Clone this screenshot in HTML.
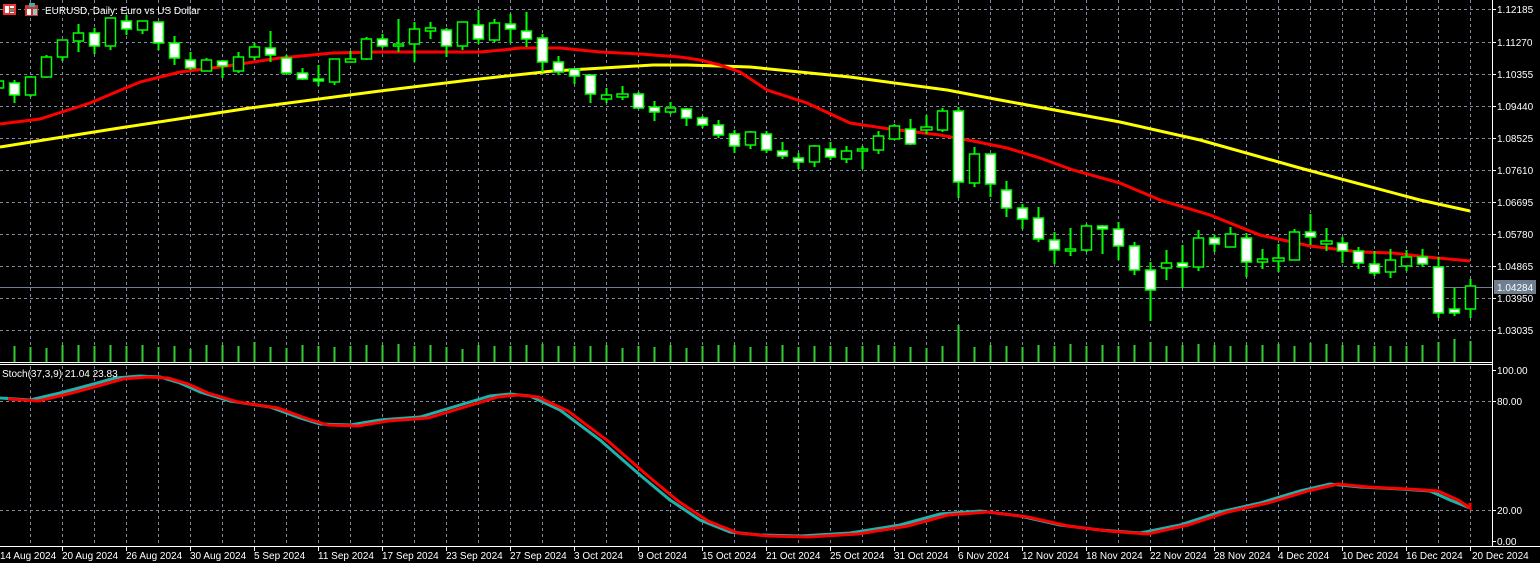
<!DOCTYPE html>
<html><head><meta charset="utf-8"><style>
html,body{margin:0;padding:0;background:#000;width:1540px;height:563px;overflow:hidden}
svg{display:block}
text{font-family:"Liberation Sans","DejaVu Sans",sans-serif;font-size:10px;fill:#fff}
</style></head><body>
<svg id="s" width="1540" height="563" xmlns="http://www.w3.org/2000/svg">
<rect width="1540" height="563" fill="#000"/>
<g id="grid" stroke="#7d8898" stroke-width="1" stroke-dasharray="3,3"></g>
<line x1="0" y1="287.5" x2="1492" y2="287.5" stroke="#6f7f8f" stroke-width="1"/>
<g id="vol" stroke="#32cd32" stroke-width="2"></g>
<polyline id="yel" fill="none" stroke="#ffff00" stroke-width="3"/>
<polyline id="red" fill="none" stroke="#ff0000" stroke-width="3"/>
<g id="cand"></g>
<polyline id="st1" fill="none" stroke="#20b2aa" stroke-width="3"/>
<polyline id="st2" fill="none" stroke="#ff0000" stroke-width="3"/>
<line x1="0" y1="362.5" x2="1492" y2="362.5" stroke="#fff"/>
<line x1="0" y1="364.5" x2="1492" y2="364.5" stroke="#fff"/>
<line x1="1492.5" y1="0" x2="1492.5" y2="546" stroke="#fff"/>
<line x1="0" y1="546.5" x2="1540" y2="546.5" stroke="#fff"/>
<g id="ticks" stroke="#fff"></g>
<rect x="1494" y="280" width="42" height="14" fill="#6f7f8f"/>
<!-- header -->
<rect x="3" y="4" width="13" height="11" fill="#e33"/><rect x="5" y="6" width="4" height="7" fill="#fff"/><rect x="10" y="6" width="4" height="2" fill="#fff"/><rect x="10" y="9" width="4" height="2" fill="#2aa"/><rect x="10" y="12" width="4" height="1" fill="#fff"/>
<rect x="25" y="5" width="13" height="11" fill="#c33"/><rect x="29" y="3" width="6" height="4" fill="#4aa"/><rect x="27" y="9" width="4" height="6" fill="#fff"/><rect x="33" y="9" width="4" height="6" fill="#8cc"/>
<text x="45" y="14" font-size="11">EURUSD, Daily:  Euro vs US Dollar</text>
<text x="2" y="377">Stoch(37,3,9) 21.04 23.83</text>
<g id="plab">
<text x="1497" y="13">1.12185</text>
<text x="1497" y="46">1.11270</text>
<text x="1497" y="78">1.10355</text>
<text x="1497" y="110">1.09440</text>
<text x="1497" y="142">1.08525</text>
<text x="1497" y="174">1.07610</text>
<text x="1497" y="206">1.06695</text>
<text x="1497" y="238">1.05780</text>
<text x="1497" y="270">1.04865</text>
<text x="1497" y="291">1.04284</text>
<text x="1497" y="302">1.03950</text>
<text x="1497" y="334">1.03035</text>
<text x="1497" y="374">100.00</text>
<text x="1497" y="405">80.00</text>
<text x="1497" y="514">20.00</text>
<text x="1497" y="545">0.00</text>
</g>
<g>
<text x="0" y="559">14 Aug 2024</text>
<text x="62" y="559">20 Aug 2024</text>
<text x="126" y="559">26 Aug 2024</text>
<text x="190" y="559">30 Aug 2024</text>
<text x="254" y="559">5 Sep 2024</text>
<text x="318" y="559">11 Sep 2024</text>
<text x="382" y="559">17 Sep 2024</text>
<text x="446" y="559">23 Sep 2024</text>
<text x="510" y="559">27 Sep 2024</text>
<text x="574" y="559">3 Oct 2024</text>
<text x="638" y="559">9 Oct 2024</text>
<text x="702" y="559">15 Oct 2024</text>
<text x="766" y="559">21 Oct 2024</text>
<text x="830" y="559">25 Oct 2024</text>
<text x="894" y="559">31 Oct 2024</text>
<text x="958" y="559">6 Nov 2024</text>
<text x="1022" y="559">12 Nov 2024</text>
<text x="1086" y="559">18 Nov 2024</text>
<text x="1150" y="559">22 Nov 2024</text>
<text x="1214" y="559">28 Nov 2024</text>
<text x="1278" y="559">4 Dec 2024</text>
<text x="1342" y="559">10 Dec 2024</text>
<text x="1406" y="559">16 Dec 2024</text>
<text x="1472" y="559">20 Dec 2024</text>
</g>
</svg>
<script>
var NS="http://www.w3.org/2000/svg";
function el(p,t,a){var e=document.createElementNS(NS,t);for(var k in a)e.setAttribute(k,a[k]);document.getElementById(p).appendChild(e);return e;}
// grid
for(var x=30;x<1492;x+=32){el("grid","line",{x1:x+.5,y1:0,x2:x+.5,y2:362});el("grid","line",{x1:x+.5,y1:366,x2:x+.5,y2:546});}
[9,42,74,106,138,170,202,234,266,298,330].forEach(function(y){el("grid","line",{x1:0,y1:y+.5,x2:1492,y2:y+.5});});
[401,510].forEach(function(y){el("grid","line",{x1:0,y1:y+.5,x2:1492,y2:y+.5});});
[370,401,510,541].forEach(function(y){el("ticks","line",{x1:1492,y1:y+.5,x2:1496,y2:y+.5});});
[9,42,74,106,138,170,202,234,266,298,330].forEach(function(y){el("ticks","line",{x1:1492,y1:y+.5,x2:1496,y2:y+.5});});
for(var x=-2;x<1492;x+=64)el("ticks","line",{x1:x+.5,y1:546,x2:x+.5,y2:551});
// candles: [bodyTop, bodyBot, hi, lo, white?]
var C=[[81,88,79,90,0],[83,95,80,103,1],[77,95,76,97,0],[57,77,55,78,0],[40,57,40,61,0],[33,41,24,52,0],[33,46,28,54,1],[18,46,18,50,0],[21,29,15,35,1],[21,30,21,34,0],[22,43,22,50,1],[43,58,36,65,1],[60,68,52,70,1],[60,71,58,71,0],[61,66,60,78,1],[57,71,52,73,0],[47,57,43,60,0],[48,55,31,62,1],[58,73,55,75,1],[73,79,68,80,1],[79,81,65,86,1],[59,82,59,85,0],[59,62,51,62,0],[39,59,37,60,0],
[39,46,34,48,1],[44,46,19,52,0],[29,44,22,62,0],[28,31,22,39,0],[30,46,28,57,1],[22,46,22,50,0],[25,39,10,44,1],[23,40,19,42,0],[24,29,14,43,1],[31,39,12,47,1],[38,62,34,72,1],[62,72,56,75,1],[69,76,69,84,1],[75,94,75,103,1],[95,99,88,103,0],[95,95,86,100,0],[94,108,92,109,1],[107,112,101,121,1],[108,112,102,114,0],[109,118,108,126,1],[118,125,116,128,1],[125,135,120,138,1],[134,146,130,153,1],
[132,145,131,149,0],[134,150,131,153,1],[151,156,142,159,1],[158,162,153,169,1],[146,162,145,167,0],[149,157,142,160,1],[151,159,146,163,0],[149,151,146,169,0],[136,150,131,154,0],[126,139,124,140,0],[129,144,119,145,1],[128,129,115,134,0],[111,130,108,132,0],[111,182,107,198,1],[154,183,147,187,0],[154,184,154,197,1],[190,208,181,217,1],[208,219,204,229,1],[218,239,207,242,1],[240,250,232,264,1],[249,251,228,256,0],[226,250,224,252,0],[226,229,225,254,1],[229,246,222,260,1],
[246,270,242,275,1],[270,290,262,321,1],[263,268,250,280,0],[263,267,245,288,1],[238,267,230,271,0],[238,244,235,252,1],[234,247,227,247,0],[238,262,233,277,1],[259,262,249,269,0],[259,259,244,272,0],[232,260,229,260,0],[232,237,214,245,1],[242,242,228,251,0],[243,251,237,263,1],[251,263,247,269,1],[264,273,251,276,1],[260,272,249,278,0],[257,266,250,271,0],[257,264,249,267,1],[267,313,257,318,1],[309,313,288,316,1],[286,309,279,318,0]];
var V=[347,346,347,348,345,345,346,345,346,345,347,346,349,345,345,346,342,347,348,345,346,347,346,345,345,344,346,345,347,349,345,346,346,345,344,346,346,346,345,348,346,347,345,348,346,345,345,347,346,345,347,346,346,347,346,345,346,347,348,346,325,347,345,346,347,345,346,344,346,345,346,345,342,346,345,344,345,346,345,345,344,346,343,344,345,345,346,346,346,345,342,339,341];
C.forEach(function(c,i){var x=-2+16*i;
 el("cand","line",{x1:x+.5,y1:c[2],x2:x+.5,y2:c[3],stroke:"#00ff00","stroke-width":2});
 var h=Math.max(c[1]-c[0],1);
 if(c[1]-c[0]<2){el("cand","rect",{x:x-5,y:c[0]-1,width:11,height:3,fill:c[4]?"#fff":"#000",stroke:"#00ff00","stroke-width":1.5});}
 else el("cand","rect",{x:x-4.5,y:c[0],width:10,height:h,fill:c[4]?"#fff":"#000",stroke:"#00ff00","stroke-width":1.5});
 el("vol","line",{x1:x+.5,y1:V[i]||346,x2:x+.5,y2:362});
});
function pts(a){return a.map(function(p){return p[0]+","+p[1]}).join(" ");}
document.getElementById("red").setAttribute("points",pts([[0,124],[40,119],[90,103],[140,82],[180,72],[220,67],[280,58],[333,53],[380,52],[480,52],[503,50],[520,48],[560,48],[600,52],[640,54],[680,57],[700,60],[720,65],[740,72],[767,90],[807,103],[850,123],[890,129],[940,135],[973,141],[1007,148],[1040,158],[1073,170],[1120,183],[1160,200],[1210,215],[1260,235],[1310,246],[1360,252],[1393,253],[1427,257],[1470,261]]));
document.getElementById("yel").setAttribute("points",pts([[0,147],[113,129],[250,108],[380,91],[470,80],[553,71],[603,68],[653,65],[687,65],[750,67],[850,77],[947,90],[1000,100],[1120,122],[1200,140],[1300,168],[1420,200],[1470,211]]));
var S=[[0,398],[30,400],[60,393],[90,385],[115,378],[140,376],[160,377],[180,383],[200,392],[230,401],[270,407],[300,418],[320,424],[350,425],[380,420],[420,417],[460,405],[490,396],[510,394],[530,396],[560,410],[600,440],[640,475],[670,500],[700,520],[730,532],[760,535],[800,536],[850,533],[900,525],[940,514],[980,511],[1020,516],[1060,525],[1100,530],[1140,533],[1180,525],[1220,512],[1260,503],[1300,491],[1330,484],[1360,487],[1400,489],[1430,491],[1450,500],[1470,508]];
document.getElementById("st1").setAttribute("points",pts(S));
document.getElementById("st2").setAttribute("points",pts(S.map(function(p,i){var y=p[1];if(i>0&&i<S.length-1){}return [Math.min(p[0]+8,1470),y+ (i>35?0:1)];}).concat([[1470,503]])));
</script>
</body></html>
